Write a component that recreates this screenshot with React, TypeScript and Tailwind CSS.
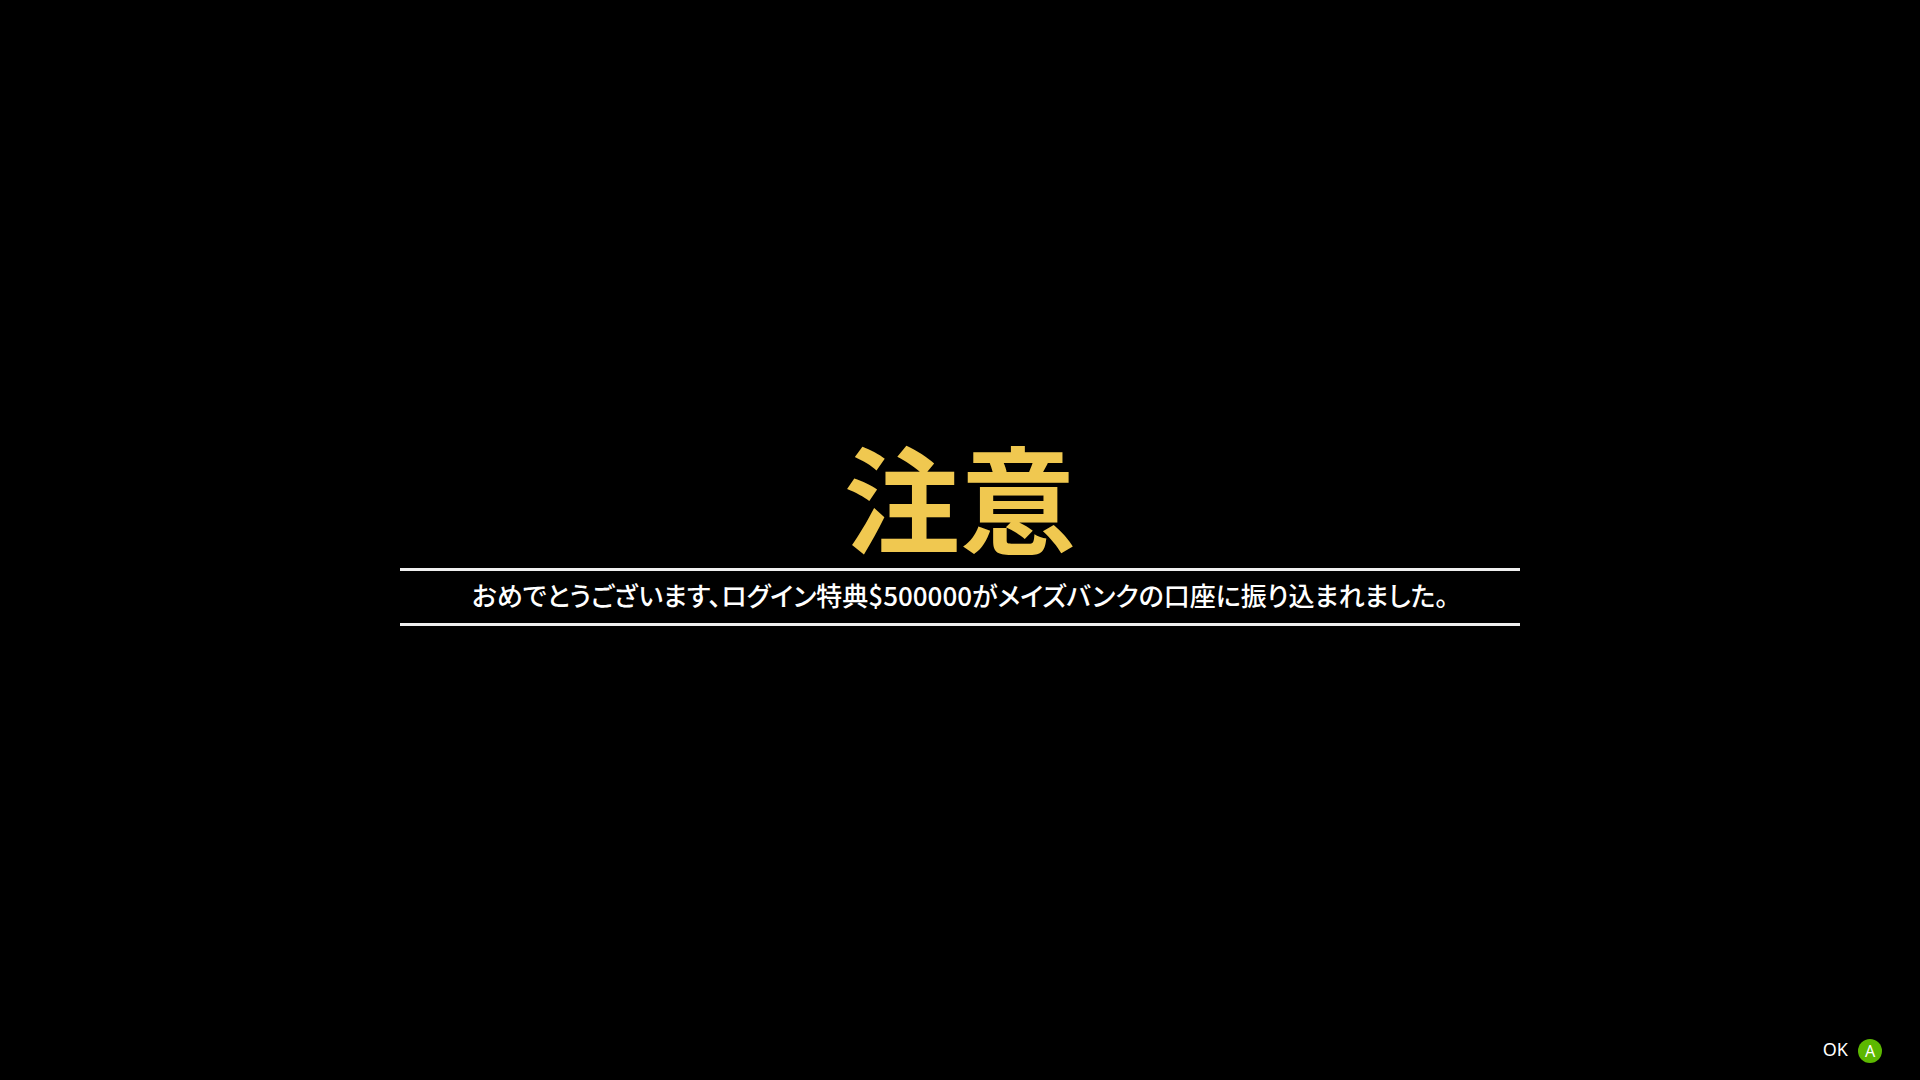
export default function App() {
  return (
    <div className="flex min-h-screen flex-col bg-black font-['Noto_Sans_CJK_JP','Noto_Sans',sans-serif] text-white">
      <main className="flex flex-1 flex-col items-center px-4 pt-[428px]">
        <h1 className="pb-2 text-[116px] leading-[132px] font-bold text-[#f0c850]">注意</h1>
        <p className="w-full max-w-[1120px] border-y-3 border-[#efefef] pb-1 text-center text-[26px] leading-[48px] font-medium [font-feature-settings:'palt']">
          おめでとうございます、ログイン特典$500000がメイズバンクの口座に振り込まれました。
        </p>
      </main>
      <footer className="flex justify-end pr-[38px] pb-[15px]">
        <button type="button" className="flex items-center gap-2.5 font-['Noto_Sans',sans-serif] text-lg leading-6">
          <span className="pb-1">OK</span>
          <span className="flex size-6 items-center justify-center rounded-full bg-[#5cb800] text-base">A</span>
        </button>
      </footer>
    </div>
  );
}
